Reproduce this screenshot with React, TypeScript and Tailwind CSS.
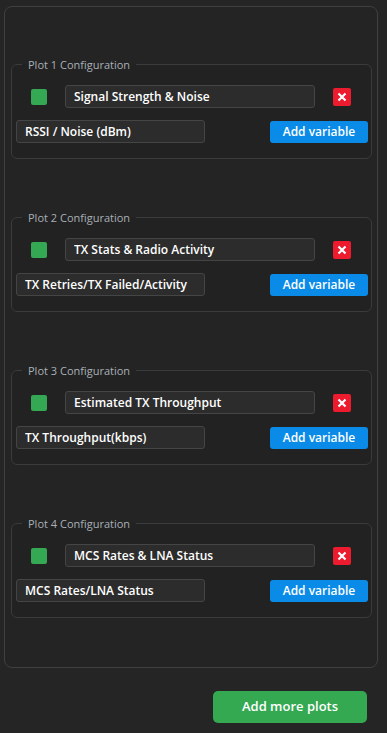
import React from 'react';

interface Plot {
  id: number;
  title: string;
  variable: string;
}

const plots: Plot[] = [
  { id: 1, title: 'Signal Strength & Noise', variable: 'RSSI / Noise (dBm)' },
  { id: 2, title: 'TX Stats & Radio Activity', variable: 'TX Retries/TX Failed/Activity' },
  { id: 3, title: 'Estimated TX Throughput', variable: 'TX Throughput(kbps)' },
  { id: 4, title: 'MCS Rates & LNA Status', variable: 'MCS Rates/LNA Status' },
];

const PlotConfig: React.FC<{ plot: Plot }> = ({ plot }) => (
  <fieldset className="border border-[#3b3b3b] rounded-[6px] bg-[#222222] h-[102px]">
    <legend className="ml-[10px] px-[6px] text-[11px] leading-[15px] text-[#a9b0b8]">
      Plot {plot.id} Configuration
    </legend>
    <div className="flex items-center pl-[19px] mt-[13px]">
      <div className="w-4 h-4 rounded-[2px] bg-[#34a853]" />
      <input
        type="text"
        defaultValue={plot.title}
        className="ml-[18px] w-[250px] h-[23px] px-2 bg-[#2c2c2c] border border-[#454545] rounded-[3px] text-[12px] font-semibold text-white outline-none"
      />
      <button className="ml-[18px] w-[18px] h-[18px] rounded-[2px] bg-[#ec1b2e] flex items-center justify-center">
        <svg width="10" height="10" viewBox="0 0 10 10">
          <path d="M1.5 1.5 L8.5 8.5 M8.5 1.5 L1.5 8.5" stroke="white" strokeWidth="2.2" />
        </svg>
      </button>
    </div>
    <div className="flex items-center justify-between pl-[4px] pr-[3px] mt-[12px]">
      <input
        type="text"
        defaultValue={plot.variable}
        className="w-[189px] h-[23px] px-2 bg-[#2c2c2c] border border-[#454545] rounded-[3px] text-[12px] font-semibold text-white outline-none"
      />
      <button className="w-[98px] h-[22px] rounded-[3px] bg-[#0b8be8] text-white text-[12px] font-semibold">
        Add variable
      </button>
    </div>
  </fieldset>
);

export default function App() {
  return (
    <div
      className="w-[387px] h-[733px] bg-[#252525] pt-[6px] pl-[4px] overflow-hidden"
      style={{ fontFamily: '"Open Sans", "Noto Sans", sans-serif' }}
    >
      <div className="w-[374px] h-[662px] border border-[#404040] rounded-[8px] bg-[#242424] pt-[50px] pl-[6px] pr-[5px] flex flex-col gap-[51px]">
        {plots.map(p => (
          <PlotConfig key={p.id} plot={p} />
        ))}
      </div>
      <div className="flex justify-end pr-[20px] mt-[23px]">
        <button className="w-[154px] h-[32px] rounded-[5px] bg-[#35a852] text-white text-[13px] font-semibold">
          Add more plots
        </button>
      </div>
    </div>
  );
}
